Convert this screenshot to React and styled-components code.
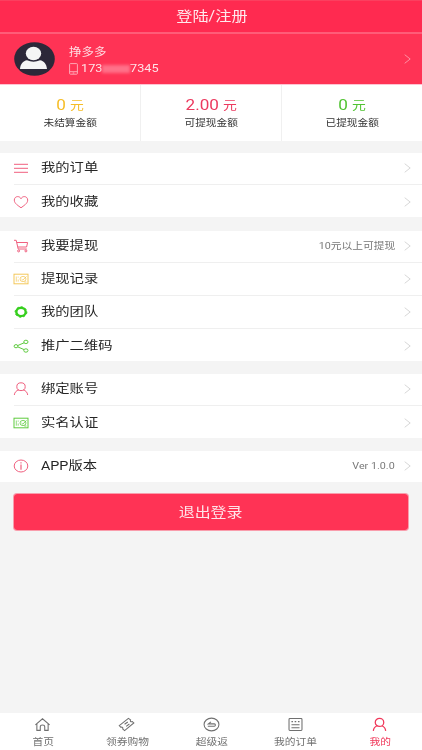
import React from 'react';
import styled, { createGlobalStyle, css } from 'styled-components';

const GlobalStyle = createGlobalStyle`
  * {
    box-sizing: border-box;
  }

  body {
    margin: 0;
    background: #f4f4f4;
    font-family: Roboto, 'Noto Sans CJK SC', sans-serif;
  }
`;

// the whole interface uses slightly wide lettering
const wide = css`
  display: inline-block;
  white-space: nowrap;
  transform: scaleX(1.155);
  transform-origin: ${({ $origin }) => $origin || 'center'};
`;

const Page = styled.div`
  display: flex;
  flex-direction: column;
  width: 422px;
  height: 750px;
  overflow: hidden;
  background: #f4f4f4;
`;

const Header = styled.header`
  display: flex;
  align-items: center;
  justify-content: center;
  height: 34px;
  padding: 0 0 1px 1px;
  background: #ff2a50;
  border-bottom: 2px solid #ff5c78;
  border-top: 1px solid #fb3f5f;
`;

const Title = styled.span`
  ${wide}
  font-size: 14px;
  line-height: 20px;
  color: #ffe9ed;
`;

const Profile = styled.section`
  display: flex;
  align-items: center;
  height: 51px;
  padding: 0 11px 0 14px;
  background: #ff3355;
  border-bottom: 1px solid #ffc3d2;
`;

const Avatar = styled.svg`
  width: 41px;
  height: 34px;
  margin-right: 14px;
`;

const ProfileInfo = styled.div`
  display: flex;
  flex: 1;
  flex-direction: column;
  align-items: flex-start;
  padding-top: 4px;
`;

const UserName = styled.span`
  ${wide}
  font-size: 10.8px;
  line-height: 16px;
  color: #ffdbe1;
`;

const Phone = styled.div`
  display: flex;
  align-items: center;
  height: 17px;
`;

const PhoneIcon = styled.svg`
  width: 9px;
  height: 12px;
  margin-right: 3px;
`;

const Digits = styled.span`
  ${wide}
  width: ${({ $width }) => $width}px;
  font-size: 11px;
  line-height: 16px;
  color: #ffe3e8;
`;

const Mask = styled.span`
  width: 28px;
  height: 8px;
  background: #ff7189;
  filter: blur(1.5px);
`;

const Stats = styled.section`
  display: flex;
  height: 56px;
  background: #fff;
`;

const Stat = styled.div`
  display: flex;
  flex: 1;
  flex-direction: column;
  align-items: center;
  padding-top: 11px;

  & + & {
    border-left: 1px solid #f0f0f0;
  }
`;

const Amount = styled.span`
  ${wide}
  font-size: 14.8px;
  line-height: 18px;
  height: 18px;
  color: ${({ $color }) => $color};

  small {
    font-size: 12px;
  }
`;

const StatLabel = styled.span`
  ${wide}
  margin-top: 2px;
  font-size: 9.3px;
  line-height: 14px;
  color: #333;
`;

const Group = styled.section`
  margin-top: ${({ $gap }) => $gap || 13}px;
  padding-left: 14px;
  background: #fff;
`;

const Row = styled.div`
  display: flex;
  align-items: center;
  height: 31px;
  padding: 0 11px 1px 0;

  & + & {
    height: 33px;
    padding-bottom: 0;
    border-top: 1px solid #efefef;
  }

  & + &:last-child {
    padding-top: 1px;
  }
`;

const RowIcon = styled.svg`
  width: 14px;
  height: 14px;
  margin-right: 13px;
  overflow: visible;
  fill: none;
  stroke: ${({ $color }) => $color};
  stroke-width: 1;
`;

const RowLabel = styled.span`
  ${wide}
  font-size: 12.4px;
  line-height: 18px;
  color: #262626;
`;

const RowNote = styled.span`
  ${wide}
  margin-left: auto;
  margin-right: 9px;
  font-size: 9.3px;
  line-height: 14px;
  color: #777;
`;

const Arrow = styled.svg`
  width: 7px;
  height: 10px;
  margin-left: ${({ $auto }) => ($auto ? 'auto' : '0')};
  fill: none;
  stroke: ${({ $color }) => $color || '#d2d2d2'};
  stroke-width: 0.9;
`;

const LogoutButton = styled.button`
  display: flex;
  align-items: center;
  justify-content: center;
  height: 38px;
  margin: 11px 13px 0 13px;
  padding: 0;
  background: #ff3355;
  background-clip: padding-box;
  border: 1px solid rgba(255, 51, 85, 0.45);
  border-radius: 4px;
  font-family: inherit;
`;

const LogoutText = styled.span`
  ${wide}
  font-size: 13.8px;
  line-height: 20px;
  color: #ffe3e8;
`;

const TabBar = styled.nav`
  display: flex;
  height: 37px;
  margin-top: auto;
  padding-left: 1px;
  background: #fff;
`;

const Tab = styled.div`
  display: flex;
  flex: 1;
  flex-direction: column;
  align-items: center;
  padding-top: 4px;
  color: ${({ $active }) => ($active ? '#f0385a' : '#707070')};
`;

const TabIcon = styled.svg`
  width: 17px;
  height: 15px;
  margin-right: 1px;
  fill: none;
  stroke: currentColor;
  stroke-width: 1;
`;

const TabLabel = styled.span`
  ${wide}
  margin-top: 3px;
  font-size: 9.3px;
  line-height: 14px;
`;

const PINK = '#f0607f';
const GREEN = '#5ecb3e';
const YELLOW = '#f4c85a';

const icons = {
  list: <path d="M0 3.3h14M0 7.3h14M0 11.3h14" />,
  heart: (
    <path d="M7 12.8C4.5 10.8 0.3 8.6 0.3 5.1 0.3 3 1.8 1.6 3.7 1.6 5.2 1.6 6.4 2.5 7 3.7 7.6 2.5 8.8 1.6 10.3 1.6 12.2 1.6 13.7 3 13.7 5.1 13.7 8.6 9.5 10.8 7 12.8z" />
  ),
  cart: (
    <>
      <path d="M0 1.3h2.2L4.2 10h8.6M2.8 3.5h10.8L12.6 8H3.8" />
      <circle cx="4.6" cy="11.9" r="1" />
      <circle cx="11.9" cy="11.9" r="1" />
    </>
  ),
  card: (
    <>
      <rect x="0" y="2.2" width="14" height="9.6" />
      <path d="M2.3 4.5v5.2M4.2 4.5v1.2M4.2 7.5v2.2" strokeWidth="0.7" />
      <ellipse cx="9" cy="7" rx="3" ry="2.6" strokeWidth="0.8" />
      <path d="M7.5 7l1.3 1.1 3.7-3.7M10.3 10h2.2" strokeWidth="0.8" />
    </>
  ),
  ring: (
    <>
      <ellipse cx="7" cy="7" rx="4.7" ry="4.1" strokeWidth="2.4" />
      <ellipse cx="7" cy="7" rx="5.9" ry="5.2" strokeWidth="1" strokeDasharray="2.2 2" />
    </>
  ),
  share: (
    <>
      <ellipse cx="2" cy="7.2" rx="1.9" ry="1.6" />
      <ellipse cx="11.9" cy="2.9" rx="2.1" ry="1.7" />
      <ellipse cx="11.9" cy="11.5" rx="2.1" ry="1.7" />
      <path d="M3.8 6.5l6.3-2.7M3.8 7.9l6.3 2.7" />
    </>
  ),
  user: (
    <>
      <ellipse cx="7" cy="4.7" rx="4.2" ry="3.9" />
      <path d="M0.3 13C0.6 10.3 2.3 8.6 4.8 7.8M13.7 13C13.4 10.3 11.7 8.6 9.2 7.8" />
    </>
  ),
  info: (
    <>
      <ellipse cx="7" cy="7" rx="6.8" ry="6" />
      <path d="M7 3.2v1.2M7 5.4v5.4" strokeWidth="1.2" />
    </>
  ),
};

const tabIcons = {
  home: <path d="M1.3 7.3L8 1.6l6.7 5.7M2.7 6.3v6.2h3.2V9.2c0-2.4 4.2-2.4 4.2 0v3.3h3.2V6.3" />,
  ticket: (
    <>
      <path d="M1.2 8L9.8 1.2l2 1.5c-.7 1.3.4 2.2 1.7 1.5l1.4 1.3L6.2 12.7l-1.8-1.5c.7-1.2-.5-2.1-1.6-1.6z" />
      <path d="M6.2 6.8l3-2.2M7.7 8.8l3-2.3" />
    </>
  ),
  rebate: (
    <>
      <ellipse cx="8" cy="7" rx="7" ry="6" />
      <path d="M4.5 8.7h6.2c1.3 0 1.3-2.3 0-2.3H5L7.5 4.5M5 6.4h3" />
    </>
  ),
  orders: (
    <>
      <rect x="1.9" y="1.4" width="12.2" height="11.2" rx="0.8" />
      <path d="M4.2 4.3h1.4M7.2 4.3h1.5M10.3 4.3h1.5M4.2 7.2h7.6M4.2 10h7.6" />
    </>
  ),
  me: (
    <>
      <ellipse cx="8" cy="5" rx="4" ry="3.8" strokeWidth="1.2" />
      <path d="M2.2 13c.2-2.5 1.5-4 3.6-4.8M13.8 13c-.2-2.5-1.5-4-3.6-4.8" strokeWidth="1.2" />
    </>
  ),
};

const stats = [
  { value: '0', label: '未结算金额', color: '#f6bd26' },
  { value: '2.00', label: '可提现金额', color: '#ec3a5f' },
  { value: '0', label: '已提现金额', color: '#51c332' },
];

const groups = [
  {
    gap: 12,
    rows: [
      { icon: 'list', color: PINK, label: '我的订单' },
      { icon: 'heart', color: PINK, label: '我的收藏' },
    ],
  },
  {
    gap: 14,
    rows: [
      { icon: 'cart', color: PINK, label: '我要提现', note: '10元以上可提现' },
      { icon: 'card', color: YELLOW, label: '提现记录' },
      { icon: 'ring', color: '#35cf1d', label: '我的团队' },
      { icon: 'share', color: GREEN, label: '推广二维码' },
    ],
  },
  {
    gap: 13,
    rows: [
      { icon: 'user', color: PINK, label: '绑定账号' },
      { icon: 'card', color: GREEN, label: '实名认证' },
    ],
  },
  {
    gap: 13,
    rows: [{ icon: 'info', color: PINK, label: 'APP版本', note: 'Ver 1.0.0' }],
  },
];

const tabs = [
  { icon: 'home', label: '首页' },
  { icon: 'ticket', label: '领券购物' },
  { icon: 'rebate', label: '超级返' },
  { icon: 'orders', label: '我的订单' },
  { icon: 'me', label: '我的', active: true },
];

const Chevron = (props) => (
  <Arrow viewBox="0 0 7 10" {...props}>
    <path d="M0.7 0.7L6.2 5 0.7 9.3" />
  </Arrow>
);

const App = () => {
  return (
    <Page>
      <GlobalStyle />
      <Header>
        <Title>登陆/注册</Title>
      </Header>
      <Profile>
        <Avatar viewBox="0 0 41 34">
          <ellipse cx="20.5" cy="17" rx="20.3" ry="16.8" fill="#2c2839" />
          <ellipse cx="19.5" cy="11.5" rx="7.7" ry="6.7" fill="#f5f5f5" />
          <path
            d="M6 27C6.5 22 9 19 13 18.3C17 20.2 22 20.2 26 18.3C30 19 32.5 22 33 27z"
            fill="#f5f5f5"
          />
        </Avatar>
        <ProfileInfo>
          <UserName $origin="left">挣多多</UserName>
          <Phone>
            <PhoneIcon viewBox="0 0 9 12" fill="none" stroke="#ffb3c0" strokeWidth="0.9">
              <rect x="0.6" y="0.6" width="7.8" height="10.6" rx="0.8" />
              <path d="M0.6 8.7h7.8M3.7 10h1.6" />
            </PhoneIcon>
            <Digits $origin="left" $width={21}>173</Digits>
            <Mask />
            <Digits $origin="left" $width={29}>7345</Digits>
          </Phone>
        </ProfileInfo>
        <Chevron $color="#ff9aac" />
      </Profile>
      <Stats>
        {stats.map((stat) => (
          <Stat key={stat.label}>
            <Amount $color={stat.color}>
              {stat.value} <small>元</small>
            </Amount>
            <StatLabel>{stat.label}</StatLabel>
          </Stat>
        ))}
      </Stats>
      {groups.map((group) => (
        <Group key={group.rows[0].label} $gap={group.gap}>
          {group.rows.map((row) => (
            <Row key={row.label}>
              <RowIcon viewBox="0 0 14 14" $color={row.color}>
                {icons[row.icon]}
              </RowIcon>
              <RowLabel $origin="left">{row.label}</RowLabel>
              {row.note && <RowNote $origin="right">{row.note}</RowNote>}
              <Chevron $auto={!row.note} />
            </Row>
          ))}
        </Group>
      ))}
      <LogoutButton type="button">
        <LogoutText>退出登录</LogoutText>
      </LogoutButton>
      <TabBar>
        {tabs.map((tab) => (
          <Tab key={tab.label} $active={tab.active}>
            <TabIcon viewBox="0 0 16 14">{tabIcons[tab.icon]}</TabIcon>
            <TabLabel>{tab.label}</TabLabel>
          </Tab>
        ))}
      </TabBar>
    </Page>
  );
};

export default App;
